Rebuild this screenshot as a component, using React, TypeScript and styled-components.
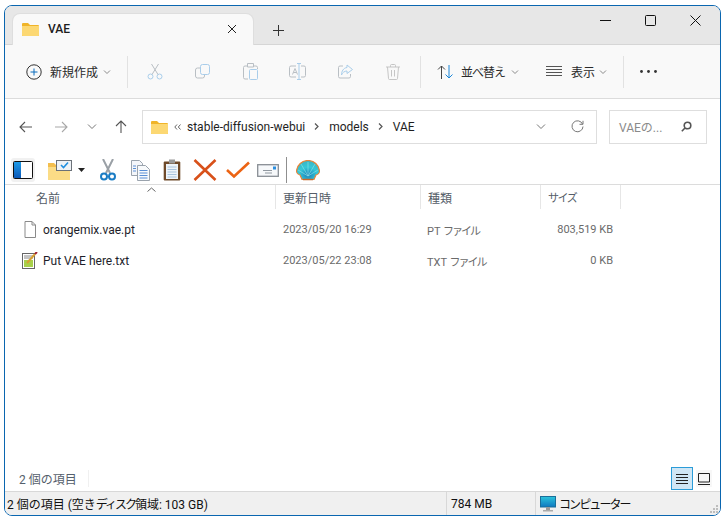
import React from "react";
import styled, { createGlobalStyle } from "styled-components";

const Global = createGlobalStyle`
  html, body { margin: 0; padding: 0; background: #fff; }
  body { font-family: Roboto, "Noto Sans CJK JP", sans-serif; font-size: 12px; color: #1a1a1a; }
`;

const Page = styled.div`
  width: 727px; height: 523px; box-sizing: border-box; padding: 5px 6px 7px 4px; background: #fff; overflow: hidden;
`;
const Win = styled.div`
  position: relative; height: 100%; box-sizing: border-box; border: 1.5px solid #0a66b0; border-radius: 8px;
  display: flex; flex-direction: column; overflow: hidden; background: #fff;
`;
const TitleBar = styled.div`
  height: 38px; flex: none; background: #e7e7e7; border-bottom: 1px solid #d6d6d6; display: flex; align-items: flex-end; padding-left: 8px;
`;
const Tab = styled.div`
  width: 240px; height: 31px; background: #f9f9f9; border-radius: 7px 7px 0 0; display: flex; align-items: center; padding: 0 0 1px 9px; box-sizing: border-box; margin-bottom: -1px; box-shadow: 0 0 0 1px #dedede;
`;
const TabTitle = styled.span`
  margin-left: 9px; flex: 1; font-size: 12px; font-weight: 500; color: #1c1c1c;
`;
const TabClose = styled.span`
  display: flex; margin-right: 16px;
`;
const NewTab = styled.span`
  display: flex; margin: 0 0 8px 20px; align-self: flex-end;
`;
const WinControls = styled.div`
  margin-left: auto; align-self: flex-start; display: flex; align-items: center; gap: 34px; padding: 9px 19px 0 0;
`;
const CommandBar = styled.div`
  height: 54px; flex: none; background: #f9f9f9; border-bottom: 1px solid #dcdcdc; box-sizing: border-box; display: flex; align-items: center; padding: 0 0 0 21px;
`;
const CmdButton = styled.div<{ $w: number; $gap: number }>`
  width: ${(p) => p.$w}px; display: flex; align-items: center; flex: none; gap: ${(p) => p.$gap}px; color: #2a2a2a; font-size: 12px; white-space: nowrap;
`;
const ChevWrap = styled.span<{ $ml: number }>`
  display: flex; margin-left: ${(p) => p.$ml}px;
`;
const TightLabel = styled.span`
  letter-spacing: -1px;
`;
const CmdIcon = styled.div<{ $w: number; $ml?: number }>`
  width: ${(p) => p.$w}px; flex: none; display: flex; justify-content: center; margin-left: ${(p) => p.$ml ?? 0}px;
`;
const Divider = styled.div<{ $ml: number; $mr: number }>`
  width: 1px; height: 32px; background: #e2e2e2; margin: 0 ${(p) => p.$mr}px 0 ${(p) => p.$ml}px; flex: none;
`;
const AddressRow = styled.div`
  height: 53px; flex: none; display: flex; align-items: center; padding: 2px 13px 0 14px; gap: 12px; box-sizing: border-box;
`;
const NavGroup = styled.div`
  display: flex; align-items: center; gap: 19px; flex: none; margin-right: 3px;
`;
const NavItem = styled.span<{ $ml?: number }>`
  display: flex; margin-left: ${(p) => p.$ml ?? 0}px;
`;
const AddressBox = styled.div`
  width: 455px; height: 34px; box-sizing: border-box; border: 1px solid #dedede; display: flex; align-items: center; padding: 0 12px 0 8px; font-size: 12px; flex: none; color: #1e1e1e;
`;
const Crumb = styled.span`
  margin-right: 9px;
`;
const CrumbSep = styled.span<{ $ml?: number; $mr?: number }>`
  display: flex; margin-left: ${(p) => p.$ml ?? 0}px; margin-right: ${(p) => p.$mr ?? 10}px;
`;
const Push = styled.span`
  margin-left: auto; display: flex; align-items: center; gap: 25px;
`;
const SearchBox = styled.div`
  width: 98px; height: 34px; box-sizing: border-box; border: 1px solid #dedede; display: flex; align-items: center; justify-content: space-between; padding: 0 14px 0 9px; color: #8a8a8a; flex: none;
`;
const ShellBar = styled.div`
  height: 33px; flex: none; display: flex; align-items: center; padding: 4px 0 0 6px; border-bottom: 1px solid #dcdcdc; position: relative; box-sizing: border-box;
`;
const SortCaret = styled.span`
  position: absolute; left: 142px; bottom: -8px; display: flex;
`;
const Slot = styled.div<{ $w: number; $ml?: number }>`
  width: ${(p) => p.$w}px; display: flex; justify-content: center; align-items: center; flex: none; margin-left: ${(p) => p.$ml ?? 0}px;
`;
const PanelSlot = styled(Slot)`
  height: 24px; background: #f1f1f1; border-radius: 3px;
`;
const VSep = styled.div`
  width: 1px; height: 26px; background: #8f8f8f; margin: 0 8px 0 6px; flex: none;
`;
const Header = styled.div`
  display: grid; grid-template-columns: 271px 145px 120px 80px; height: 24px; flex: none; color: #555d68; font-size: 12px;
`;
const HeadCell = styled.div<{ $pad: number }>`
  padding-left: ${(p) => p.$pad}px; display: flex; align-items: center; border-right: 1px solid #e6e6e6; box-sizing: border-box;
`;
const FileList = styled.div`
  flex: 1; padding-top: 5px;
`;
const Row = styled.div`
  display: grid; grid-template-columns: 271px 145px 120px 72px; height: 31px; align-items: center; color: #6a6a6a;
`;
const NameCell = styled.div`
  display: flex; align-items: center; padding-left: 17px; gap: 5px; color: #1e1e2a; font-size: 12px;
`;
const DateCell = styled.div`
  padding-left: 7px; font-size: 11px;
`;
const TypeCell = styled.div`
  padding-left: 6px; font-size: 11px;
`;
const SizeCell = styled.div`
  text-align: right; font-size: 11px;
`;
const Kana = styled.span<{ $fs?: number; $ls: number }>`
  font-size: ${(p) => (p.$fs ? `${p.$fs}px` : "inherit")}; letter-spacing: ${(p) => p.$ls}px;
`;
const Footer = styled.div`
  height: 25px; flex: none; display: flex; align-items: center; justify-content: space-between; padding: 0 8px 0 14px; color: #55606c; font-size: 12px; box-sizing: border-box;
`;
const FooterText = styled.span`
  padding-right: 11px; border-right: 1px solid #f0f0f0;
`;
const ViewToggles = styled.div`
  display: flex; align-items: center; gap: 3px;
`;
const ViewBtn = styled.div<{ $on?: boolean }>`
  width: ${(p) => (p.$on ? 22 : 16)}px; height: ${(p) => (p.$on ? 23 : 17)}px; box-sizing: border-box; display: flex; align-items: center; justify-content: center;
  background: ${(p) => (p.$on ? "#cfe6f5" : "#f7f7f7")}; border: ${(p) => (p.$on ? "1px solid #2b9cd8" : "none")};
`;
const StatusBar = styled.div`
  height: 24px; flex: none; background: #f0f0f0; border-top: 1px solid #d8d8d8; display: flex; align-items: center; font-size: 12px; color: #101010; position: relative; box-sizing: border-box;
`;
const StatusCell = styled.div<{ $w: number; $pad: number }>`
  width: ${(p) => p.$w}px; height: 100%; box-sizing: border-box; display: flex; align-items: center; padding-left: ${(p) => p.$pad}px; border-right: 1px solid #d8d8d8; flex: none; white-space: pre;
`;
const StatusLast = styled.div`
  display: flex; align-items: center; gap: 3px; padding-left: 4px;
`;
const Grip = styled.span`
  position: absolute; right: 1px; bottom: 1px; display: flex;
`;

const Line = ({ d, c = "#333", w = 1, s = 16, h }: { d: string; c?: string; w?: number; s?: number; h?: number }) => (
  <svg width={s} height={h ?? s} viewBox={`0 0 ${s} ${h ?? s}`} fill="none" stroke={c} strokeWidth={w}><path d={d} /></svg>
);
const Chevron = ({ ml }: { ml: number }) => <ChevWrap $ml={ml}><Line s={8} h={6} c="#8a8a8a" d="M1 1.500l3 3 3-3" /></ChevWrap>;

const Folder = ({ s = 17 }: { s?: number }) => (
  <svg width={s} height={s * 14 / 17} viewBox="0 0 17 14">
    <path d="M0 2a1 1 0 0 1 1-1h5l2 2h8a1 1 0 0 1 1 1v9a1 1 0 0 1-1 1H1a1 1 0 0 1-1-1z" fill="#f0b429" />
    <path d="M0 4h17v9a1 1 0 0 1-1 1H1a1 1 0 0 1-1-1z" fill="#fcd873" />
  </svg>
);

export default function App() {
  const blue = "#a9cdea";
  const gray = "#b9bfc4";
  return (
    <Page>
      <Global />
      <Win>
        <TitleBar>
          <Tab>
            <Folder />
            <TabTitle>VAE</TabTitle>
            <TabClose><Line s={10} c="#222" d="M1 1l8 8M9 1l-8 8" /></TabClose>
          </Tab>
          <NewTab><Line s={11} c="#333" d="M5.500 0v11M0 5.500h11" /></NewTab>
          <WinControls>
            <Line s={11} c="#111" d="M0 5.500h11" />
            <Line s={11} c="#111" d="M1.500.5h8a1 1 0 0 1 1 1v8a1 1 0 0 1-1 1h-8a1 1 0 0 1-1-1v-8a1 1 0 0 1 1-1z" />
            <Line s={11} c="#111" d="M.5.5l10 10M10.500.5l-10 10" />
          </WinControls>
        </TitleBar>
        <CommandBar>
          <CmdButton $w={98} $gap={8}>
            <svg width="16" height="16" viewBox="0 0 16 16" fill="none">
              <circle cx="8" cy="8" r="7.200" stroke="#333" />
              <path d="M8 4.500v7M4.500 8h7" stroke="#0a6cbd" />
            </svg>
            <span>新規作成</span>
            <Chevron ml={-3} />
          </CmdButton>
          <Divider $ml={3} $mr={19} />
          <CmdIcon $w={16}>
            <svg width="16" height="17" viewBox="0 0 16 17" fill="none" stroke={blue}>
              <circle cx="3.500" cy="13.500" r="2.500" /><circle cx="12.500" cy="13.500" r="2.500" />
              <path d="M5 11.500L11.500 1M11 11.500L4.500 1" stroke={gray} />
            </svg>
          </CmdIcon>
          <CmdIcon $w={16} $ml={31}>
            <svg width="15" height="15" viewBox="0 0 15 15" fill="none">
              <rect x="5.500" y=".5" width="9" height="10" rx="2" stroke={blue} />
              <path d="M5 4H2.500a2 2 0 0 0-2 2v6a2 2 0 0 0 2 2h5a2 2 0 0 0 2-2v-1" stroke={gray} />
            </svg>
          </CmdIcon>
          <CmdIcon $w={16} $ml={32}>
            <svg width="15" height="17" viewBox="0 0 15 17" fill="none">
              <path d="M4 3H2a1.500 1.500 0 0 0-1.500 1.500v10A1.500 1.500 0 0 0 2 16h3M11 3h2a1.500 1.500 0 0 1 1.500 1.500V6M4.500.5h6v3.500h-6z" stroke={gray} />
              <rect x="6.500" y="6.500" width="8" height="10" rx="1" stroke={blue} />
            </svg>
          </CmdIcon>
          <CmdIcon $w={17} $ml={31}>
            <svg width="17" height="17" viewBox="0 0 17 17" fill="none">
              <path d="M7 3H2a1.500 1.500 0 0 0-1.500 1.500v8A1.500 1.500 0 0 0 2 14h5M12 3h3a1.500 1.500 0 0 1 1.500 1.500v8A1.500 1.500 0 0 1 15 14h-3" stroke={gray} />
              <path d="M3.500 11.500l2.500-6 2.500 6M4.500 9.500h3" stroke={gray} />
              <path d="M8 .5h4M8 16.500h4M10 .5v16" stroke={blue} />
            </svg>
          </CmdIcon>
          <CmdIcon $w={16} $ml={31}>
            <svg width="15" height="15" viewBox="0 0 15 15" fill="none">
              <path d="M5 2H2a1.500 1.500 0 0 0-1.500 1.500v9A1.500 1.500 0 0 0 2 14h9a1.500 1.500 0 0 0 1.500-1.500V10" stroke={gray} />
              <path d="M9 1l5.500 4.500L9 9.500V7C6.500 7 4.500 8.500 3.500 11c0-4 2-7 5.500-7.500z" stroke={blue} />
            </svg>
          </CmdIcon>
          <CmdIcon $w={15} $ml={32}>
            <svg width="14" height="16" viewBox="0 0 14 16" fill="none" stroke="#c5c5c5">
              <path d="M0 3h14M4.500 3V1.500a1 1 0 0 1 1-1h3a1 1 0 0 1 1 1V3M1.500 3l1 11.500a1 1 0 0 0 1 1h7a1 1 0 0 0 1-1l1-11.500M5.500 6v6.500M8.500 6v6.500" />
            </svg>
          </CmdIcon>
          <Divider $ml={20} $mr={16} />
          <CmdButton $w={109} $gap={7}>
            <svg width="17" height="14" viewBox="0 0 17 14" fill="none">
              <path d="M4.500 14V1M1 4.500L4.500 1 8 4.500" stroke="#444" />
              <path d="M12 0v13M8.500 9.500L12 13l3.500-3.500" stroke="#1a86d8" />
            </svg>
            <TightLabel>並べ替え</TightLabel>
            <Chevron ml={-1} />
          </CmdButton>
          <CmdButton $w={77} $gap={9}>
            <Line s={16} h={11} c="#555" d="M0 .5h16M0 3.500h16M0 6.500h16M0 9.500h16" />
            <span>表示</span>
            <Chevron ml={-5} />
          </CmdButton>
          <Divider $ml={0} $mr={16} />
          <svg width="17" height="3" viewBox="0 0 17 3" fill="#333">
            <circle cx="1.500" cy="1.500" r="1.400" /><circle cx="8.500" cy="1.500" r="1.400" /><circle cx="15.500" cy="1.500" r="1.400" />
          </svg>
        </CommandBar>
        <AddressRow>
          <NavGroup>
            <NavItem><Line s={14} h={12} c="#555" w={1.1} d="M13 6H1M6 1L1 6l5 5" /></NavItem>
            <NavItem $ml={2}><Line s={14} h={12} c="#a8a8a8" w={1.1} d="M1 6h12M8 1l5 5-5 5" /></NavItem>
            <NavItem><Line s={10} h={6} c="#777" d="M1 .5l4 4 4-4" /></NavItem>
            <NavItem $ml={-1}><Line s={12} h={13} c="#555" w={1.1} d="M6 13V1M1 6l5-5 5 5" /></NavItem>
          </NavGroup>
          <AddressBox>
            <Folder />
            <CrumbSep $ml={6} $mr={6}><Line s={7} h={6} c="#666" d="M3 .5L.8 3 3 5.500M6.500.5L4.300 3l2.200 2.500" /></CrumbSep>
            <Crumb>stable-diffusion-webui</Crumb>
            <CrumbSep><Line s={5} h={7} c="#555" w={1.2} d="M1 .5L4 3.500 1 6.500" /></CrumbSep>
            <Crumb>models</Crumb>
            <CrumbSep><Line s={5} h={7} c="#555" w={1.2} d="M1 .5L4 3.500 1 6.500" /></CrumbSep>
            <Crumb>VAE</Crumb>
            <Push>
              <Line s={10} h={6} c="#777" d="M1 .5l4 4 4-4" />
              <svg width="13" height="13" viewBox="0 0 13 13" fill="none" stroke="#777">
                <path d="M11.500 4A5.500 5.500 0 1 0 12 6.500M12 .8V4.300H8.500" />
              </svg>
            </Push>
          </AddressBox>
          <SearchBox>
            <span>VAEの...</span>
            <svg width="11" height="11" viewBox="0 0 11 11" fill="none" stroke="#555" strokeWidth="1.600">
              <circle cx="6.500" cy="4.500" r="3.300" /><path d="M4 7l-3.200 3.200" />
            </svg>
          </SearchBox>
        </AddressRow>
        <ShellBar>
          <PanelSlot $w={24}>
            <svg width="20" height="18" viewBox="0 0 20 18">
              <defs><linearGradient id="pn" x1="0" x2="0" y1="0" y2="1"><stop offset="0" stopColor="#1f9be8" /><stop offset="1" stopColor="#0a58b8" /></linearGradient></defs>
              <rect x="0.500" y="0.500" width="19" height="17" rx="1" fill="#fff" stroke="#111" />
              <rect x="1" y="1" width="7" height="16" fill="url(#pn)" />
            </svg>
          </PanelSlot>
          <Slot $w={34} $ml={8}>
            <svg width="24" height="20" viewBox="0 0 24 20">
              <path d="M0 3h6l2 2h14v15H0z" fill="#f3be4e" />
              <path d="M0 7h22v13H0z" fill="#fbdc86" />
              <rect x="8.500" y=".5" width="15" height="10" fill="#eef2f6" stroke="#6b7178" />
              <path d="M13 5l2.500 2.500L20 2.500" fill="none" stroke="#1f8fe0" strokeWidth="1.600" />
            </svg>
          </Slot>
          <svg width="7" height="4" viewBox="0 0 7 4" style={{ marginLeft: 1 }}><path d="M0 0h7L3.500 4z" fill="#222" /></svg>
          <Slot $w={32} $ml={7}>
            <svg width="16" height="22" viewBox="0 0 16 22" fill="none">
              <path d="M3 0l7 14M13 0L6 14" stroke="#9aa0a6" strokeWidth="2" />
              <circle cx="4" cy="17.500" r="3" stroke="#1a7cc4" strokeWidth="2" />
              <circle cx="12" cy="17.500" r="3" stroke="#1a7cc4" strokeWidth="2" />
            </svg>
          </Slot>
          <Slot $w={30} $ml={1}>
            <svg width="19" height="21" viewBox="0 0 19 21">
              <path d="M.5.5h8l3 3v12H.5z" fill="#f4f6fa" stroke="#9aa3ad" />
              <path d="M6.500 5.500h8l4 4v11h-12z" fill="#f8fafc" stroke="#9aa3ad" />
              <path d="M2 6h3M2 8.500h3M2 11h3M8.500 10.500h8M8.500 13h8M8.500 15.500h8M8.500 18h8" stroke="#5a8fd6" />
            </svg>
          </Slot>
          <Slot $w={33}>
            <svg width="18" height="22" viewBox="0 0 18 22">
              <rect x=".7" y="2.500" width="16.600" height="19" rx="1" fill="#6f4a2a" />
              <rect x="3" y="5" width="12" height="15" fill="#eef4fa" />
              <rect x="6" y=".5" width="6" height="4" fill="#9a9a9a" />
              <path d="M4.500 8h9M4.500 10.500h9M4.500 13h9M4.500 15.500h9M4.500 18h9" stroke="#a9c4de" />
            </svg>
          </Slot>
          <Slot $w={33}>
            <svg width="24" height="22" viewBox="0 0 24 22" fill="none">
              <path d="M1.500 1L22.500 21M22.500 1L1.500 21" stroke="#d8511a" strokeWidth="2.600" />
            </svg>
          </Slot>
          <Slot $w={33}>
            <svg width="24" height="18" viewBox="0 0 24 18" fill="none">
              <path d="M1 9l7 6.500L23 1.500" stroke="#ec6414" strokeWidth="2.600" />
            </svg>
          </Slot>
          <Slot $w={25} $ml={1}>
            <svg width="22" height="13" viewBox="0 0 22 13">
              <rect x=".7" y=".7" width="20.600" height="11.600" fill="#f6f8fa" stroke="#888e94" strokeWidth="1.300" />
              <rect x="16" y="2.500" width="3" height="3" fill="#2b8fe0" />
              <path d="M6 6.500h9M8 9h7" stroke="#9098a0" />
            </svg>
          </Slot>
          <VSep />
          <Slot $w={26}>
            <svg width="24" height="21" viewBox="0 0 24 21">
              <defs><radialGradient id="sh" cx=".5" cy=".75" r=".8"><stop offset="0" stopColor="#1c7fb8" /><stop offset=".5" stopColor="#35c8d8" /><stop offset="1" stopColor="#3bb0c0" /></radialGradient></defs>
              <path d="M12 .5C6 .5 1 5 .5 11c0 2 1.500 3.500 3.500 4l2 4.500h12l2-4.500c2-.5 3.500-2 3.500-4C23 5 18 .5 12 .5z" fill="url(#sh)" stroke="#e8853a" strokeWidth="1.200" />
              <path d="M12 16V2M12 16L5 4M12 16L19 4M12 16L2 10M12 16l10-6" stroke="#8fe6ea" strokeWidth=".6" fill="none" />
              <path d="M7 19.500h10" stroke="#c8682a" strokeWidth="1.500" />
            </svg>
          </Slot>
          <SortCaret><Line s={9} h={5} c="#666" d="M.5 4.500L4.500 1l4 3.500" /></SortCaret>
        </ShellBar>
        <Header>
          <HeadCell $pad={31}>名前</HeadCell>
          <HeadCell $pad={7}>更新日時</HeadCell>
          <HeadCell $pad={7}>種類</HeadCell>
          <HeadCell $pad={7}><Kana $fs={11} $ls={-1.500}>サイズ</Kana></HeadCell>
        </Header>
        <FileList>
          <Row>
            <NameCell>
              <svg width="16" height="17" viewBox="0 0 16 17" fill="none" style={{ flex: "none" }}>
                <path d="M3 .5h7l3.500 3.500v12.500H3z" fill="#fff" stroke="#8a8a8a" /><path d="M10 .5V4h3.500" stroke="#8a8a8a" />
              </svg>
              <span>orangemix.vae.pt</span>
            </NameCell>
            <DateCell>2023/05/20 16:29</DateCell>
            <TypeCell>PT <Kana $ls={-2}>ファイル</Kana></TypeCell>
            <SizeCell>803,519 KB</SizeCell>
          </Row>
          <Row>
            <NameCell>
              <svg width="16" height="17" viewBox="0 0 16 17" style={{ flex: "none" }}>
                <rect x=".5" y="1.500" width="12" height="15" fill="#fff" stroke="#666" />
                <rect x="2" y="8" width="9" height="7" fill="#a8d04a" />
                <path d="M2 4h9M2 6h9" stroke="#888" />
                <path d="M5 11l8-9" stroke="#d8a030" strokeWidth="2" />
                <path d="M13 2l2-2" stroke="#a02030" strokeWidth="2" />
              </svg>
              <span>Put VAE here.txt</span>
            </NameCell>
            <DateCell>2023/05/22 23:08</DateCell>
            <TypeCell>TXT <Kana $ls={-2}>ファイル</Kana></TypeCell>
            <SizeCell>0 KB</SizeCell>
          </Row>
        </FileList>
        <Footer>
          <FooterText>2 個の項目</FooterText>
          <ViewToggles>
            <ViewBtn $on><Line s={12} h={10} c="#222" d="M0 .5h12M0 3.500h12M0 6.500h12M0 9.500h12" /></ViewBtn>
            <ViewBtn><Line s={12} h={12} c="#222" d="M.5.5h11v8.500H.5zM0 11.500h12" /></ViewBtn>
          </ViewToggles>
        </Footer>
        <StatusBar>
          <StatusCell $w={442} $pad={2}>2 個の項目 (空き<Kana $ls={-2}>ディスク</Kana>領域: 103 GB)</StatusCell>
          <StatusCell $w={89} $pad={4}>784 MB</StatusCell>
          <StatusLast>
            <svg width="16" height="16" viewBox="0 0 16 16">
              <defs><linearGradient id="mon" x1="0" x2="0" y1="0" y2="1"><stop offset="0" stopColor="#2cc4dc" /><stop offset="1" stopColor="#0f78c0" /></linearGradient></defs>
              <rect x=".5" y=".5" width="15" height="10.500" fill="url(#mon)" stroke="#1a6f9a" />
              <rect x="6" y="11" width="4" height="3" fill="#999" /><rect x="3" y="14" width="10" height="1.500" fill="#aaa" />
            </svg>
            <Kana $ls={-1.900}>コンピューター</Kana>
          </StatusLast>
          <Grip>
            <svg width="9" height="9" viewBox="0 0 9 9" fill="#bdbdbd">
              <rect x="6" y="0" width="2" height="2" /><rect x="3" y="3" width="2" height="2" /><rect x="6" y="3" width="2" height="2" />
              <rect x="0" y="6" width="2" height="2" /><rect x="3" y="6" width="2" height="2" /><rect x="6" y="6" width="2" height="2" />
            </svg>
          </Grip>
        </StatusBar>
      </Win>
    </Page>
  );
}
